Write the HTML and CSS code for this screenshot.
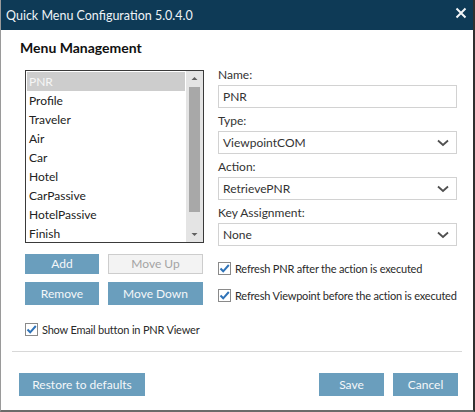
FILE: index.html
```html
<!DOCTYPE html>
<html>
<head>
<meta charset="utf-8">
<link rel="stylesheet" href="styles.css">
</head>
<body>
<div class="window">
  <div class="titlebar">
    <span class="title">Quick Menu Configuration 5.0.4.0</span>
    <svg class="close" width="12" height="12" viewBox="0 0 12 12"><path d="M1.5 1.5 L10.5 10.5 M10.5 1.5 L1.5 10.5" stroke="#f2f5f7" stroke-width="2" fill="none"/></svg>
  </div>
  <div class="content">
    <h1 class="heading">Menu Management</h1>
    <div class="main">
      <div class="left">
        <div class="listbox">
          <ul class="items">
            <li class="selected">PNR</li>
            <li>Profile</li>
            <li>Traveler</li>
            <li>Air</li>
            <li>Car</li>
            <li>Hotel</li>
            <li>CarPassive</li>
            <li>HotelPassive</li>
            <li>Finish</li>
          </ul>
          <div class="scrollbar">
            <svg class="arrow" width="17" height="14" viewBox="0 0 17 14"><path d="M5.5 9 L8.5 6 L11.5 9 Z" fill="#606060"/></svg>
            <div class="track"><div class="thumb"></div></div>
            <svg class="arrow" width="17" height="14" viewBox="0 0 17 14"><path d="M5.5 5 L8.5 8 L11.5 5 Z" fill="#606060"/></svg>
          </div>
        </div>
        <div class="btngrid">
          <button class="btn">Add</button>
          <button class="btn disabled">Move Up</button>
          <button class="btn tall">Remove</button>
          <button class="btn tall">Move Down</button>
        </div>
        <label class="check email">
          <svg class="cb" width="13" height="13" viewBox="0 0 13 13"><rect x="0.5" y="0.5" width="12" height="12" fill="#fff" stroke="#8a8a8a"/><path d="M2.5 6.5 L5.2 9.3 L10.8 3" stroke="#2f73b8" stroke-width="2" fill="none"/></svg>
          <span>Show Email button in PNR Viewer</span>
        </label>
      </div>
      <div class="right">
        <div class="field">
          <div class="label">Name:</div>
          <div class="box">PNR</div>
        </div>
        <div class="field">
          <div class="label">Type:</div>
          <div class="box select"><span>ViewpointCOM</span><svg class="chev" width="12" height="8" viewBox="0 0 12 8"><path d="M1 1.5 L6 6 L11 1.5" stroke="#505050" stroke-width="1.8" fill="none"/></svg></div>
        </div>
        <div class="field">
          <div class="label">Action:</div>
          <div class="box select"><span>RetrievePNR</span><svg class="chev" width="12" height="8" viewBox="0 0 12 8"><path d="M1 1.5 L6 6 L11 1.5" stroke="#505050" stroke-width="1.8" fill="none"/></svg></div>
        </div>
        <div class="field">
          <div class="label">Key Assignment:</div>
          <div class="box select"><span>None</span><svg class="chev" width="12" height="8" viewBox="0 0 12 8"><path d="M1 1.5 L6 6 L11 1.5" stroke="#505050" stroke-width="1.8" fill="none"/></svg></div>
        </div>
        <label class="check first">
          <svg class="cb" width="13" height="13" viewBox="0 0 13 13"><rect x="0.5" y="0.5" width="12" height="12" fill="#fff" stroke="#8a8a8a"/><path d="M2.5 6.5 L5.2 9.3 L10.8 3" stroke="#2f73b8" stroke-width="2" fill="none"/></svg>
          <span>Refresh PNR after the action is executed</span>
        </label>
        <label class="check second">
          <svg class="cb" width="13" height="13" viewBox="0 0 13 13"><rect x="0.5" y="0.5" width="12" height="12" fill="#fff" stroke="#8a8a8a"/><path d="M2.5 6.5 L5.2 9.3 L10.8 3" stroke="#2f73b8" stroke-width="2" fill="none"/></svg>
          <span>Refresh Viewpoint before the action is executed</span>
        </label>
      </div>
    </div>
    <div class="separator"></div>
    <div class="footer">
      <button class="btn footbtn restore">Restore to defaults</button>
      <div class="spacer"></div>
      <button class="btn footbtn small">Save</button>
      <button class="btn footbtn small">Cancel</button>
    </div>
  </div>
</div>
</body>
</html>
```

FILE: styles.css
```css
* { box-sizing: border-box; }
html, body { margin: 0; padding: 0; background: #fff; }
body {
  font-family: Lato, "Noto Sans", sans-serif;
  font-size: 12px;
  color: #2a2a2a;
}
.window {
  width: 475px;
  height: 412px;
  display: flex;
  flex-direction: column;
  border-left: 1px solid #9a9a9a;
  border-right: 2px solid #303030;
  border-bottom: 2px solid #6a6a6a;
  background: #fff;
}
.titlebar {
  height: 30px;
  flex: none;
  background: #0e3a56;
  display: flex;
  align-items: center;
  padding: 0 6px 0 5px;
  color: #eef3f6;
}
.title { font-size: 12.5px; flex: 1; white-space: nowrap; }
.close { display: block; margin-top: -4px; }
.content {
  flex: 1;
  display: flex;
  flex-direction: column;
  padding: 0 11px 0 11px;
}
.heading {
  margin: 9px 0 0 8px;
  font-size: 14px;
  font-weight: bold;
  line-height: 18px;
  color: #111;
}
.main {
  display: flex;
  padding: 0 6px 0 13px;
  gap: 14px;
}
.left {
  width: 179px;
  flex: none;
  padding-top: 13px;
}
.listbox {
  height: 173px;
  border: 1px solid #3a3a3a;
  display: flex;
}
.items {
  list-style: none;
  margin: 0;
  padding: 1px 1px 0 1px;
  flex: 1;
}
.items li {
  height: 19px;
  line-height: 19px;
  padding-left: 2px;
  font-size: 12px;
  color: #222;
}
.items li.selected {
  background: #cdcdcd;
  color: #f6f6f6;
}
.scrollbar {
  width: 17px;
  flex: none;
  background: #e4e4e4;
  display: flex;
  flex-direction: column;
}
.arrow { display: block; flex: none; }
.track { flex: 1; padding: 2px 2px; }
.thumb {
  height: 125px;
  background: #a8a8a8;
  margin: 0 1px;
}
.btngrid {
  display: grid;
  grid-template-columns: 74px 95px;
  column-gap: 9px;
  row-gap: 8px;
  margin-top: 11px;
}
.btn {
  font-family: Lato, "Noto Sans", sans-serif;
  font-size: 12px;
  color: #f4f7f9;
  background: #6a9ebd;
  border: 1px solid #6a9ebd;
  height: 20px;
  padding: 0;
  line-height: 16px;
  white-space: nowrap;
}
.btn.tall { height: 23px; }
.btn.disabled {
  background: #f3f3f3;
  border-color: #cdcdcd;
  color: #a3a3a3;
}
.check {
  display: flex;
  align-items: center;
  gap: 4px;
  font-size: 11px;
  letter-spacing: -0.2px;
  color: #2a2a2a;
  white-space: nowrap;
}
.cb { display: block; flex: none; }
.email { margin-top: 18px; }
.right {
  flex: none;
  width: 239px;
  min-width: 0;
  padding-top: 10px;
}
.field { margin-bottom: 5px; }
.label {
  line-height: 16px;
  height: 16px;
  font-size: 12px;
  color: #333;
}
.box {
  margin-top: 2px;
  height: 23px;
  border: 1px solid #d2d2d2;
  display: flex;
  align-items: center;
  padding: 0 7px 0 4px;
  font-size: 12px;
  color: #333;
}
.select span { flex: 1; }
.chev { display: block; }
.check.first { margin-top: 16px; }
.check.second { margin-top: 14px; }
.separator {
  height: 1px;
  background: #d8d8d8;
  margin-top: 15px;
}
.footer {
  display: flex;
  padding: 21px 4px 0 7px;
  gap: 9px;
}
.spacer { flex: 1; }
.footbtn { height: 23px; }
.restore { width: 126px; }
.small { width: 65px; }
```
